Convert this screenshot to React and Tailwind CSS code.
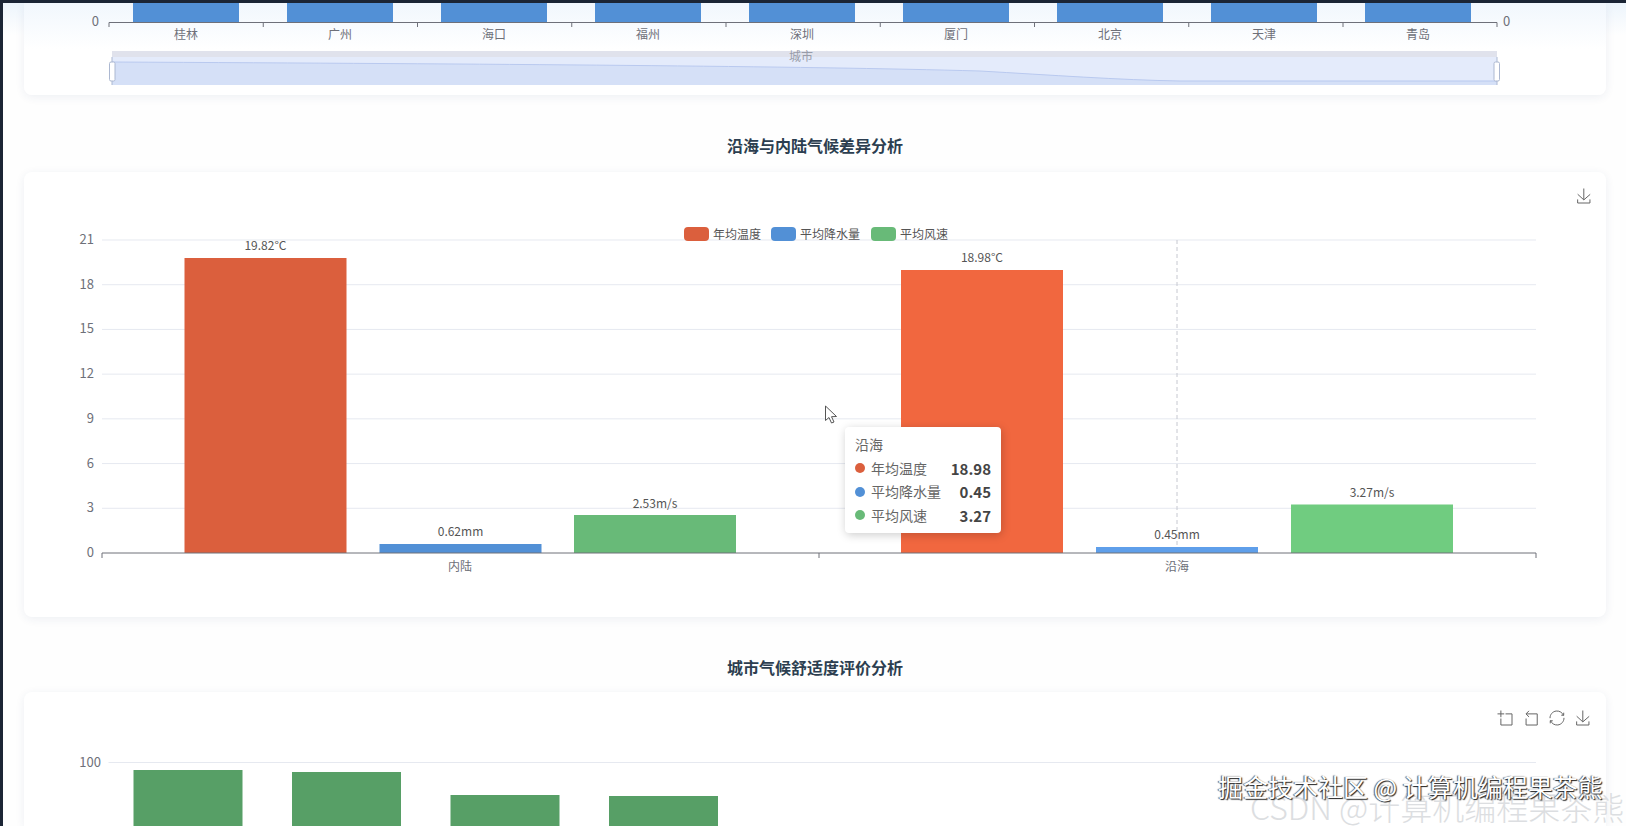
import { Fragment } from 'react';

const FONT = 'font-["Noto_Sans_CJK_SC","Noto_Sans",sans-serif]';
const CITIES = ['桂林', '广州', '海口', '福州', '深圳', '厦门', '北京', '天津', '青岛'];
const AXIS = '#6e7079';
const GRID = '#e6e9f0';

// y position of a value on the climate chart
const tempY = v => 553 - v * 14.905;

const CLIMATE = [
  { x: 184.5, top: 258, color: '#db5f3d', label: '19.82°C', labelY: 250 },
  { x: 379.5, top: 544, color: '#5290d6', label: '0.62mm', labelY: 536 },
  { x: 574, top: 515, color: '#68ba78', label: '2.53m/s', labelY: 508 },
  { x: 901, top: 270, color: '#f1673f', label: '18.98°C', labelY: 262 },
  { x: 1096, top: 547, color: '#5f9fea', label: '0.45mm', labelY: 539 },
  { x: 1291, top: 504.5, color: '#70cc80', label: '3.27m/s', labelY: 497 },
];

const LEGEND = [
  { name: '年均温度', color: '#db5f3d', w: 'w-[47px]' },
  { name: '平均降水量', color: '#5290d6', w: 'w-[60px]' },
  { name: '平均风速', color: '#68ba78', w: 'w-[48px]' },
];

const TIPS = [
  { name: '年均温度', value: '18.98', color: '#db5f3d' },
  { name: '平均降水量', value: '0.45', color: '#5290d6' },
  { name: '平均风速', value: '3.27', color: '#68ba78' },
];

const COMFORT = [
  { x: 133.5, top: 770 },
  { x: 292, top: 772 },
  { x: 450.5, top: 795 },
  { x: 609, top: 796 },
];

function ToolIcon({ d }) {
  return (
    <svg width="16" height="16" viewBox="-2 -2 64 64" fill="none" stroke="#666" strokeWidth="4">
      <path d={d} />
    </svg>
  );
}

const ICON_ZOOM = 'M0,13.5h26.9 M13.5,26.9V0 M32.1,13.5H58V58H13.5 V32.1';
const ICON_BACK = 'M22,1.4L9.9,13.5l12.3,12.3 M10.3,13.5H54.9v44.6 H10.3v-26';
const ICON_RESTORE = 'M47,18.9h9.8V8.7 M56.3,20.1 C52.1,9,40.5,0.6,26.8,2.1C12.6,3.7,1.6,16.2,2.1,30.6 M13,41.1H3.1v10.2 M3.7,39.9c4.2,11.1,15.8,19.5,29.5,18 c14.2-1.6,25.2-14.1,24.7-28.5';
const ICON_SAVE = 'M4.7,22.9L29.3,45.5L54.7,23.4M4.6,43.6L4.6,58L53.8,58L53.8,43.6M29.2,45.1L29.2,0';

function SectionTitle({ children, className }) {
  return (
    <h2 className={`text-center text-[16px] leading-[22px] font-bold text-[#2c3e50] ${className}`}>{children}</h2>
  );
}

function CityChart() {
  return (
    <svg width="1582" height="92" viewBox="24 3 1582 92" className="block">
      {CITIES.map((c, i) => (
        <Fragment key={c}>
          <rect x={133 + i * 154} y="0" width="106" height="22.5" fill="#5290d6" />
          <line x1={109 + i * 154.25} x2={109 + i * 154.25} y1="22.5" y2="27" stroke={AXIS} />
          <text x={186 + i * 154} y="39" textAnchor="middle" fontSize="12" fill={AXIS}>{c}</text>
        </Fragment>
      ))}
      <line x1="109" x2="1497" y1="22.5" y2="22.5" stroke={AXIS} />
      <line x1="1497" x2="1497" y1="22.5" y2="27" stroke={AXIS} />
      <text x="99" y="25.5" textAnchor="end" fontSize="13" fill={AXIS}>0</text>
      <text x="1503" y="25.5" fontSize="13" fill={AXIS}>0</text>

      {/* data zoom slider */}
      <rect x="112" y="57" width="1385" height="28" fill="#e4ebfb" />
      <path d="M112,62 C500,64 800,66 980,71 C1050,75 1120,80 1180,81 L1497,81 L1497,85 L112,85 Z" fill="#d5e0f7" />
      <path d="M112,62 C500,64 800,66 980,71 C1050,75 1120,80 1180,81 L1497,81" fill="none" stroke="#b9c9ef" />
      <rect x="112" y="51" width="1385" height="6" fill="#e0e2ec" />
      <text x="801" y="61" textAnchor="middle" fontSize="12" fill="#989ca9">城市</text>
      <line x1="112" x2="112" y1="57" y2="85" stroke="#acb8d1" />
      <line x1="1497" x2="1497" y1="57" y2="85" stroke="#acb8d1" />
      <rect x="109.5" y="62" width="5.5" height="19" rx="1.5" fill="#fff" stroke="#acb8d1" />
      <rect x="1494" y="62" width="5.5" height="19" rx="1.5" fill="#fff" stroke="#acb8d1" />
    </svg>
  );
}

function ClimateChart() {
  return (
    <svg width="1582" height="445" viewBox="24 172 1582 445" className="block">
      {[21, 18, 15, 12, 9, 6, 3].map(v => (
        <line key={v} x1="102" x2="1536" y1={tempY(v)} y2={tempY(v)} stroke={GRID} />
      ))}
      {[21, 18, 15, 12, 9, 6, 3, 0].map(v => (
        <text key={v} x="94" y={tempY(v) + 4} textAnchor="end" fontSize="13" fill={AXIS}>{v}</text>
      ))}
      <line x1="1177" x2="1177" y1="240" y2="553" stroke="#c6c8d0" strokeDasharray="4 3" />
      {CLIMATE.map(b => (
        <Fragment key={b.label}>
          <rect x={b.x} y={b.top} width="162" height={553 - b.top} fill={b.color} />
          <text x={b.x + 81} y={b.labelY} textAnchor="middle" fontSize="12" fill="#555">{b.label}</text>
        </Fragment>
      ))}
      <line x1="102" x2="1536" y1="553" y2="553" stroke={AXIS} />
      {[102, 819, 1536].map(x => (
        <line key={x} x1={x} x2={x} y1="553" y2="558" stroke={AXIS} />
      ))}
      <text x="460" y="571" textAnchor="middle" fontSize="12" fill={AXIS}>内陆</text>
      <text x="1177" y="571" textAnchor="middle" fontSize="12" fill={AXIS}>沿海</text>
    </svg>
  );
}

function ComfortChart() {
  return (
    <svg width="1582" height="134" viewBox="24 692 1582 134" className="block">
      <line x1="108.5" x2="1536" y1="762.5" y2="762.5" stroke={GRID} />
      <text x="101" y="766.5" textAnchor="end" fontSize="13" fill={AXIS}>100</text>
      {COMFORT.map(b => (
        <rect key={b.x} x={b.x} y={b.top} width="109" height={826 - b.top} fill="#579f66" />
      ))}
    </svg>
  );
}

export default function App() {
  return (
    <div className={`relative h-[826px] overflow-hidden border-t-[3px] border-l-[3px] border-[#1b2535] bg-[#fefefe] ${FONT}`}>
      <div className="absolute inset-x-0 top-0 h-[32px] bg-gradient-to-b from-[#edf5fc] to-transparent" />

      <div className="relative pl-[21px] pr-[20px]">
        <section className="overflow-hidden rounded-b-lg bg-gradient-to-b from-[#f1f7fd] via-white to-white shadow-[0_2px_10px_rgba(40,60,110,0.08)]">
          <CityChart />
        </section>

        <SectionTitle className="pt-[39px] pb-[16px]">沿海与内陆气候差异分析</SectionTitle>

        <section className="relative rounded-lg bg-white shadow-[0_2px_10px_rgba(40,60,110,0.08)]">
          <ClimateChart />
          <div className="absolute right-[14px] top-[16px]">
            <ToolIcon d={ICON_SAVE} />
          </div>
          <div className="absolute left-[660px] top-[55px] flex items-center text-[12px] leading-[14px] text-[#555]">
            {LEGEND.map(l => (
              <div key={l.name} className="flex items-center">
                <span className="mr-[4px] h-[14px] w-[25px] rounded-[4px]" style={{ backgroundColor: l.color }} />
                <span className={`mr-[11px] ${l.w} whitespace-nowrap`}>{l.name}</span>
              </div>
            ))}
          </div>
          {/* hover tooltip */}
          <div className="absolute left-[821px] top-[255px] h-[106px] w-[156px] rounded-[4px] bg-white px-[10px] py-[6px] text-[14px] leading-[23.5px] text-[#666] shadow-[1px_2px_10px_rgba(0,0,0,0.2)]">
            <div>沿海</div>
            {TIPS.map(t => (
              <div key={t.name} className="flex items-center">
                <span className="mr-[6px] size-[10px] rounded-full" style={{ backgroundColor: t.color }} />
                <span className="whitespace-nowrap">{t.name}</span>
                <span className="ml-auto text-[15px] font-bold text-[#444]">{t.value}</span>
              </div>
            ))}
          </div>
          {/* mouse pointer */}
          <svg className="absolute left-[800px] top-[233px]" width="14" height="20" viewBox="0 0 14 20" fill="#fff" stroke="#555" strokeWidth="1">
            <path d="M1.5 1 V15.5 L5 12.5 L7.5 18 L10 17 L7.5 11.7 L12.5 11.5 Z" />
          </svg>
        </section>

        <SectionTitle className="pt-[39px] pb-[14px]">城市气候舒适度评价分析</SectionTitle>

        <section className="relative rounded-t-lg bg-white shadow-[0_2px_10px_rgba(40,60,110,0.08)]">
          <ComfortChart />
          <div className="absolute right-[15px] top-[18px] flex gap-[10px]">
            {[ICON_ZOOM, ICON_BACK, ICON_RESTORE, ICON_SAVE].map(d => (
              <ToolIcon key={d} d={d} />
            ))}
          </div>
        </section>
      </div>

      {/* video watermarks */}
      <div className="absolute left-[1247px] top-[785px] whitespace-nowrap text-[32px] leading-[36px] font-light text-[#dcdee1]">
        CSDN @计算机编程果茶熊
      </div>
      <div className="absolute left-[1215px] top-[767px] whitespace-nowrap text-[25px] leading-[32px] text-white [text-shadow:1px_1px_1px_#222,-1px_0_1px_#555]">
        掘金技术社区 @ 计算机编程果茶熊
      </div>
    </div>
  );
}
